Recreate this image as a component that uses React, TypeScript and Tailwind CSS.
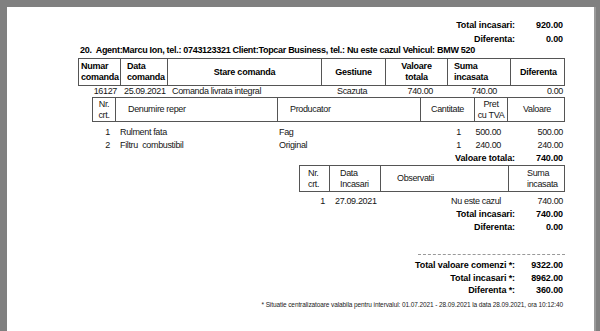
const font = "font-['Liberation_Sans',Arial,sans-serif]";

function TotalRow({ label, value, h = "h-[14px]" }: { label: string; value: string; h?: string }) {
  return (
    <div className={`flex items-center justify-end font-bold leading-none tracking-[-0.1px] text-black ${h}`}>
      <span>{label}</span>
      <span className="w-[50px] pr-[2px] text-right">{value}</span>
    </div>
  );
}

export default function App() {
  return (
    <div className="h-[331px] w-[600px] overflow-hidden bg-[#808080] pl-[7px] pt-[7px]">
      <div className={`h-[340px] w-[587px] bg-white text-[9px] tracking-[-0.35px] text-[#151515] shadow-[2px_0_0_#9a9a9a] ${font}`}>
        <div className="ml-[71px] w-[487px] pt-[11px]">
          {/* sumar agent */}
          <TotalRow label="Total incasari:" value="920.00" h="h-[15px]" />
          <TotalRow label="Diferenta:" value="0.00" h="h-[12px]" />
          <div className="h-[10px] pl-[2px] font-bold leading-[10px] tracking-[-0.3px] text-black">
            20.&nbsp; Agent:Marcu Ion, tel.: 0743123321 Client:Topcar Business, tel.: Nu este cazul Vehicul: BMW 520
          </div>

          {/* comanda */}
          <div className="mt-[3px] grid h-[28px] grid-cols-[42px_47px_154px_64px_62px_63px_55px] border border-[#555] font-bold leading-[11px] tracking-[-0.25px] text-black">
            <div className="flex items-center border-r border-[#555] pl-[2px]">Numar<br />comanda</div>
            <div className="flex items-center border-r border-[#555] pl-[6px]">Data<br />comanda</div>
            <div className="flex items-center justify-center border-r border-[#555]">Stare comanda</div>
            <div className="flex items-center justify-center border-r border-[#555]">Gestiune</div>
            <div className="flex items-center justify-center border-r border-[#555] text-center">Valoare<br />totala</div>
            <div className="flex items-center border-r border-[#555] pl-[6px]">Suma<br />incasata</div>
            <div className="flex items-center justify-center">Diferenta</div>
          </div>
          <div className="grid h-[11px] grid-cols-[42px_47px_154px_64px_62px_63px_55px] items-center leading-none">
            <span className="pr-[3px] text-right">16127</span>
            <span className="pl-[4px]">25.09.2021</span>
            <span className="pl-[5px]">Comanda livrata integral</span>
            <span className="pl-[16px]">Scazuta</span>
            <span className="pr-[14px] text-right">740.00</span>
            <span className="pr-[13px] text-right">740.00</span>
            <span className="pr-[2px] text-right">0.00</span>
          </div>

          {/* repere */}
          <div className="ml-[14px]">
            <div className="grid h-[25px] grid-cols-[23px_162px_143px_54px_33px_58px] border border-[#555] leading-[11px]">
              <div className="flex items-center justify-center border-r border-[#555] text-center">Nr.<br />crt.</div>
              <div className="flex items-center border-r border-[#555] pl-[12px]">Denumire reper</div>
              <div className="flex items-center border-r border-[#555] pl-[12px]">Producator</div>
              <div className="flex items-center justify-center border-r border-[#555]">Cantitate</div>
              <div className="flex items-center justify-center border-r border-[#555] text-center">Pret<br />cu TVA</div>
              <div className="flex items-center justify-center">Valoare</div>
            </div>
            <div className="mt-[4px]">
              {[
                ["1", "Rulment fata", "Fag", "1", "500.00", "500.00"],
                ["2", "Filtru  combustibil", "Original", "1", "240.00", "240.00"],
              ].map((r) => (
                <div key={r[0]} className="grid h-[13px] grid-cols-[23px_162px_143px_54px_33px_58px] items-center leading-none">
                  <span className="pr-[5px] text-right">{r[0]}</span>
                  <span className="whitespace-pre pl-[5px]">{r[1]}</span>
                  <span className="pl-[2px]">{r[2]}</span>
                  <span className="pr-[13px] text-right">{r[3]}</span>
                  <span className="pr-[6px] text-right">{r[4]}</span>
                  <span className="pr-[2px] text-right">{r[5]}</span>
                </div>
              ))}
              <TotalRow label="Valoare totala:" value="740.00" h="h-[13px]" />
            </div>
          </div>

          {/* incasari */}
          <div className="ml-[221px]">
            <div className="grid h-[27px] grid-cols-[30px_51px_128px_57px] border border-[#555] leading-[11px]">
              <div className="flex items-center border-r border-[#555] pl-[8px]">Nr.<br />crt.</div>
              <div className="flex items-center border-r border-[#555] pl-[10px]">Data<br />Incasari</div>
              <div className="flex items-center border-r border-[#555] pl-[16px]">Observatii</div>
              <div className="flex items-center pl-[18px]">Suma<br />incasata</div>
            </div>
            <div className="mt-[3px] grid h-[13px] grid-cols-[30px_51px_128px_57px] items-center leading-none">
              <span className="pr-[4px] text-right">1</span>
              <span className="pl-[6px]">27.09.2021</span>
              <span className="pr-[7px] text-right">Nu este cazul</span>
              <span className="pr-[2px] text-right">740.00</span>
            </div>
          </div>
          <TotalRow label="Total incasari:" value="740.00" h="h-[12px]" />
          <TotalRow label="Diferenta:" value="0.00" h="h-[15px]" />

          {/* totaluri generale */}
          <div className="ml-[340px] mt-[19px] border-t border-dashed border-[#999]" />
          <div className="mt-[4px]">
            <TotalRow label="Total valoare comenzi *:" value="9322.00" h="h-[13px]" />
            <TotalRow label="Total incasari *:" value="8962.00" h="h-[12px]" />
            <TotalRow label="Diferenta *:" value="360.00" h="h-[13px]" />
          </div>
          <div className="mt-[3px] h-[10px] pr-[2px] text-right text-[6.5px] leading-[10px] tracking-[-0.1px] text-[#222]">
            * Situatie centralizatoare valabila pentru intervalul: 01.07.2021 - 28.09.2021 la data 28.09.2021, ora 10:12:40
          </div>
        </div>
      </div>
    </div>
  );
}
